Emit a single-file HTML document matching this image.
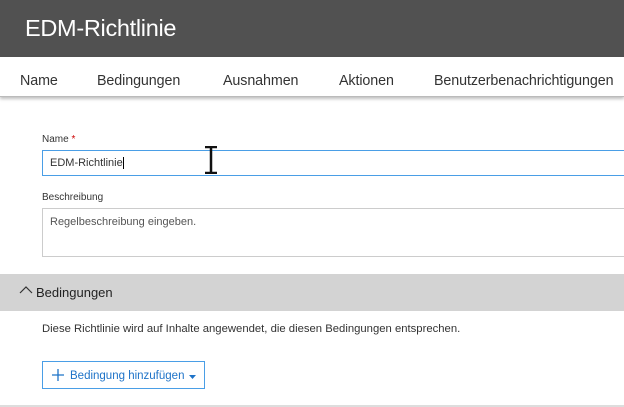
<!DOCTYPE html>
<html><head><meta charset="utf-8"><style>
*{margin:0;padding:0;box-sizing:border-box}
body{width:624px;height:407px;overflow:hidden;background:#fff;font-family:"Liberation Sans",sans-serif;position:relative;color:#333}
.hdr{position:absolute;left:0;top:0;width:624px;height:57px;background:#515151}
.hdr span{position:absolute;left:25px;top:15px;color:#fff;font-size:23.5px;letter-spacing:-0.3px}
.nav{position:absolute;left:0;top:57px;width:624px;height:40px;background:#fff;border-bottom:1px solid #bbb;box-shadow:0 2px 3px rgba(0,0,0,.25)}
.nav span{position:absolute;top:16px;font-size:14.3px;color:#333;letter-spacing:-0.1px}
.lbl{position:absolute;font-size:10px;color:#333}
.box{position:absolute;left:42px;width:600px;border:1px solid #ccc;font-size:11px;color:#555}
.band{position:absolute;left:0;top:274px;width:624px;height:37px;background:#d3d3d3}
</style></head><body>
<div class="hdr"><span>EDM-Richtlinie</span></div>
<div class="nav">
<span style="left:20px">Name</span>
<span style="left:97px">Bedingungen</span>
<span style="left:223px">Ausnahmen</span>
<span style="left:339px">Aktionen</span>
<span style="left:434px">Benutzerbenachrichtigungen</span>
</div>
<div class="lbl" style="left:42px;top:134px">Name <span style="color:#c00">*</span></div>
<div class="box" style="top:150px;height:26px;border:1px solid #4a9ee6;padding:6px 0 0 7px;color:#333">EDM-Richtlini<span style="border-right:1px solid #000">e</span></div>
<svg style="position:absolute;left:203px;top:146px" width="16" height="28"><path d="M2 1h12M8 1v26M2 27h12" stroke="#111" stroke-width="2.5" fill="none"/></svg>
<div class="lbl" style="left:42px;top:192px">Beschreibung</div>
<div class="box" style="top:208px;height:49px;padding:7px 0 0 7px">Regelbeschreibung eingeben.</div>
<div class="band"><svg style="position:absolute;left:19px;top:11px" width="14" height="10"><path d="M1 8L7 2L13 8" stroke="#333" stroke-width="1.2" fill="none"/></svg><span style="position:absolute;left:36px;top:11px;font-size:13px;color:#222">Bedingungen</span></div>
<div style="position:absolute;left:42px;top:323px;font-size:11.3px;color:#333">Diese Richtlinie wird auf Inhalte angewendet, die diesen Bedingungen entsprechen.</div>
<div style="position:absolute;left:42px;top:361px;width:163px;height:28px;border:1px solid #4a9ee6;font-size:11.5px;color:#1e73c8">
<svg style="position:absolute;left:8px;top:6px" width="14" height="14"><path d="M7 1v12M1 7h12" stroke="#1e73c8" stroke-width="1.3"/></svg>
<span style="position:absolute;left:27px;top:8px">Bedingung hinzufügen</span>
<svg style="position:absolute;left:146px;top:13px" width="7" height="4"><path d="M0 0h7L3.5 4z" fill="#1e73c8"/></svg>
</div>
<div style="position:absolute;left:0;top:405px;width:624px;height:2px;background:#ddd"></div>
</body></html>
